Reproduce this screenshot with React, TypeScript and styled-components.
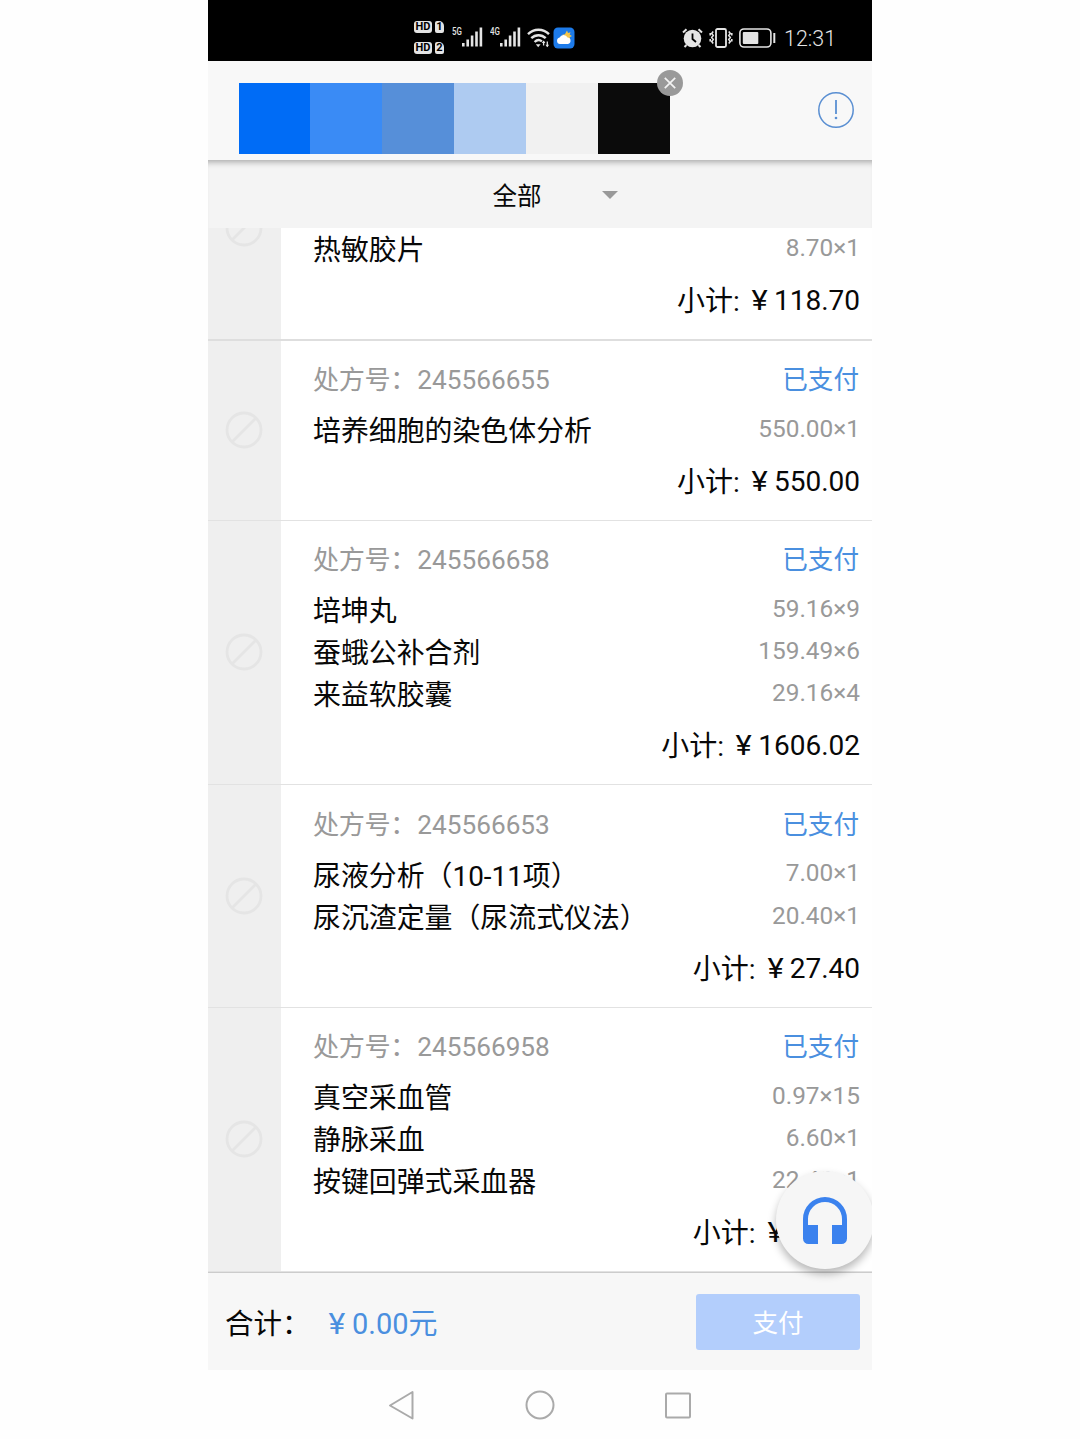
import React from 'react';
import styled, { createGlobalStyle } from 'styled-components';

const Global = createGlobalStyle`
  * { box-sizing: border-box; }
  body {
    margin: 0;
    background: #fefefe;
    font-family: Roboto, "Noto Sans CJK SC", sans-serif;
    color: #080808;
  }
  svg { display: block; flex: none; }
`;

const Phone = styled.main`
  width: 664px;
  height: 1439px;
  margin-left: 208px;
  display: flex;
  flex-direction: column;
  position: relative;
  overflow: hidden;
  background: #fefefe;
`;

const StatusBar = styled.div`
  height: 61px;
  flex: none;
  background: #000;
  color: #e4e4e4;
  display: flex;
  justify-content: space-between;
  padding: 13px 36px 0 206px;
`;

const StatusGroup = styled.div<{ $gap: number }>`
  display: flex;
  align-items: center;
  gap: ${(p) => p.$gap}px;
  height: 49px;
`;

const SimColumn = styled.div`
  display: flex;
  flex-direction: column;
  gap: 9px;
  margin-right: 8px;
`;

const SimRow = styled.div`
  display: flex;
  gap: 3px;
`;

const SimTag = styled.span<{ $w: number; $cut?: boolean }>`
  width: ${(p) => p.$w}px;
  height: 12px;
  border-radius: ${(p) => (p.$cut ? '2px 5px 2px 2px' : '3px')};
  background: #e4e4e4;
  color: #000;
  font-size: 11px;
  font-weight: 700;
  line-height: 12.5px;
  text-align: center;
`;

const Signal = styled.div`
  display: flex;
  align-items: flex-start;
  height: 22px;
  margin-right: 6.5px;
`;

const NetLabel = styled.span`
  width: 10px;
  font-size: 11px;
  line-height: 10px;
  font-weight: 500;
  transform: scaleX(0.72);
  transform-origin: left;
`;

const WeatherSlot = styled.div`
  margin-left: 3px;
`;

const Clock = styled.span`
  font-size: 21.4px;
  font-weight: 300;
  margin-left: 2.5px;
  line-height: 28px;
  padding-top: 3px;
`;

const Header = styled.header`
  height: 99px;
  flex: none;
  background: #f8f8f8;
  display: flex;
  justify-content: space-between;
  padding: 21.5px 18px 0 30.5px;
`;

const Palette = styled.div`
  display: flex;
  position: relative;
  height: 71.8px;
`;

const Swatch = styled.div<{ $color: string }>`
  width: 71.9px;
  height: 71.8px;
  background: ${(p) => p.$color};
`;

const CloseBadge = styled.button`
  position: absolute;
  right: -13px;
  top: -13px;
  width: 26px;
  height: 26px;
  padding: 0;
  border: 0;
  border-radius: 50%;
  background: #999;
  display: grid;
  place-items: center;
`;

const InfoButton = styled.button`
  width: 36px;
  height: 36px;
  margin-top: 9px;
  padding: 0;
  border: 0;
  background: none;
`;

const Filter = styled.div`
  height: 68px;
  flex: none;
  background: #f4f4f4;
  box-shadow: inset 0 7px 6px -5px rgba(0, 0, 0, 0.32);
  display: flex;
  align-items: center;
  gap: 60.5px;
  padding: 6px 0 0 284.5px;
  font-size: 24.5px;
  line-height: 36px;
`;

const Caret = styled.span`
  border: 8.5px solid transparent;
  border-top-color: #999;
  border-bottom: 0;
  margin-top: -5px;
`;

const List = styled.section`
  height: 1044px;
  flex: none;
  overflow: hidden;
  display: flex;
  flex-direction: column;
  justify-content: flex-end;
`;

const Card = styled.article<{ $rows: number; $strong?: boolean }>`
  flex: none;
  height: ${(p) => 137.9 + p.$rows * 42.2}px;
  display: flex;
  background: #fff;
  border-bottom: ${(p) => (p.$strong ? '2px solid #dedede' : '1px solid #e2e2e2')};
`;

const CheckColumn = styled.div`
  width: 73px;
  background: #efefef;
  display: grid;
  place-items: center;
  padding-right: 1px;
`;

const Detail = styled.div`
  flex: 1;
  display: flex;
  flex-direction: column;
  justify-content: flex-end;
  padding: 0 12px 7.8px 32px;
`;

const CardHead = styled.div`
  display: flex;
  justify-content: space-between;
  height: 40px;
  line-height: 40px;
  margin-bottom: 9.5px;
  font-size: 26.2px;
  color: #999;
`;

const HeadLabel = styled.span`
  letter-spacing: -0.4px;
  margin-right: 1.2px;
`;

const Paid = styled.span`
  color: #4a8fdf;
  font-size: 25.6px;
  padding-right: 1px;
`;

const Item = styled.div`
  display: flex;
  justify-content: space-between;
  height: 42.2px;
  line-height: 42.2px;
  font-size: 27.9px;
`;

const ItemName = styled.span`
  padding-top: 1.2px;
`;

const Price = styled.span`
  font-size: 24.4px;
  line-height: 41.4px;
  margin-top: -2px;
  color: #999;
`;

const Subtotal = styled.div`
  height: 60px;
  line-height: 60px;
  text-align: right;
  font-size: 28px;
  white-space: pre;
`;

const SubtotalLabel = styled.span`
  display: inline-block;
  transform: translate(0.8px, 1px);
`;

const Yen = styled.span`
  display: inline-block;
  width: 1em;
  text-align: center;
  transform: translateX(-0.5px) scaleX(1.1);
`;

const Footer = styled.footer`
  height: 98px;
  flex: none;
  background: #f7f7f7;
  border-top: 1.5px solid #ccc;
  display: flex;
  align-items: center;
  padding: 0 12px 0 17px;
  font-size: 28.5px;
`;

const Total = styled.span`
  color: #4a8fdf;
  margin-left: 12.5px;
  padding-bottom: 2px;
  font-size: 29px;
  flex: 1;
`;

const PayButton = styled.button`
  width: 164px;
  height: 56px;
  border: 0;
  padding: 0 0 3px;
  border-radius: 3px;
  background: #b3cefc;
  color: #fff;
  font: 25.5px Roboto, "Noto Sans CJK SC", sans-serif;
`;

const NavBar = styled.nav`
  height: 69px;
  display: flex;
  justify-content: center;
  gap: 108px;
  padding-top: 20px;
`;

const Support = styled.button`
  position: absolute;
  left: 568px;
  top: 1171px;
  width: 98px;
  height: 98px;
  padding: 0;
  border: 0;
  border-radius: 50%;
  background: #f6f6f6;
  box-shadow: 0 5px 9px rgba(0, 0, 0, 0.28);
  display: grid;
  place-items: center;
`;

type Line = { name: string; price: string };
type Order = { id?: string; rows: number; lines: Line[]; subtotal: string };

const orders: Order[] = [
  { rows: 2, lines: [{ name: '热敏胶片', price: '8.70×1' }], subtotal: '118.70' },
  {
    id: '245566655',
    rows: 1,
    lines: [{ name: '培养细胞的染色体分析', price: '550.00×1' }],
    subtotal: '550.00',
  },
  {
    id: '245566658',
    rows: 3,
    lines: [
      { name: '培坤丸', price: '59.16×9' },
      { name: '蚕蛾公补合剂', price: '159.49×6' },
      { name: '来益软胶囊', price: '29.16×4' },
    ],
    subtotal: '1606.02',
  },
  {
    id: '245566653',
    rows: 2,
    lines: [
      { name: '尿液分析（10-11项）', price: '7.00×1' },
      { name: '尿沉渣定量（尿流式仪法）', price: '20.40×1' },
    ],
    subtotal: '27.40',
  },
  {
    id: '245566958',
    rows: 3,
    lines: [
      { name: '真空采血管', price: '0.97×15' },
      { name: '静脉采血', price: '6.60×1' },
      { name: '按键回弹式采血器', price: '22.40×1' },
    ],
    subtotal: '43.55',
  },
];

const swatches = ['#006cf6', '#3a8bf5', '#568fd9', '#aecbf1', '#f1f1f1', '#0b0b0b'];

const Bars = () => (
  <svg width="21" height="20" viewBox="0 0 21 20" fill="#e4e4e4">
    <rect x="0" y="16" width="2.6" height="3.5" />
    <rect x="4.4" y="12.5" width="2.6" height="7" />
    <rect x="8.8" y="8.5" width="2.6" height="11" />
    <rect x="13.2" y="4.5" width="2.6" height="15" />
    <rect x="17.6" y="0.5" width="2.6" height="19" />
  </svg>
);

const Wifi = () => (
  <svg width="23" height="20" viewBox="0 0 23 20" fill="none" stroke="#e4e4e4" strokeWidth="2.4">
    <path d="M1 6.2C7 .2 16 .2 22 6.2M4.3 10.2c4-4 10.4-4 14.4 0M7.6 14c2.4-2.3 5.2-2.3 7.3-.6" />
    <path d="M8.8 16.2h4.8l-2.4 3z" fill="#e4e4e4" stroke="none" />
    <path d="M16.6 17.5v-4.5M20.3 13.5v5" strokeWidth="1.3" />
    <path d="M14.8 15l1.8-2.6 1.8 2.6zM18.5 16.7l1.8 2.6 1.8-2.6z" fill="#e4e4e4" stroke="none" />
  </svg>
);

const Weather = () => (
  <svg width="22" height="22" viewBox="0 0 22 22">
    <rect x=".5" y=".5" width="21" height="21" rx="4.5" fill="#1d7bea" />
    <path d="M14 3.5l1 2.5 2.5-.8-.8 2.6 2.3 1.2-2.3 1.3.6 2.5h-6l-2-5 2.6-.5z" fill="#f6c548" />
    <path d="M7 17a3.3 3.3 0 0 1-.4-6.5A4.3 4.3 0 0 1 14.5 10.5 3.3 3.3 0 0 1 15 17z" fill="#fff" />
  </svg>
);

const Alarm = () => (
  <svg width="21" height="20" viewBox="0 0 21 20" fill="none" stroke="#e4e4e4" strokeWidth="2">
    <circle cx="10.5" cy="10.5" r="8.8" fill="#e4e4e4" stroke="none" />
    <path d="M1 4.5L4.5 1.2M20 4.5L16.5 1.2M4.5 17l-2 2M16.5 17l2 2" />
    <path d="M10.5 5.500v5.500l3.500 3" stroke="#000" strokeWidth="1.8" />
  </svg>
);

const Vibrate = () => (
  <svg width="24" height="20" viewBox="0 0 24 20" fill="none" stroke="#e4e4e4" strokeWidth="1.8">
    <rect x="7" y="1" width="10" height="18" rx="1.5" />
    <path d="M4.2 3.5l-1.5 2 1.5 2-1.5 2 1.5 2-1.5 2 1.5 2M1.2 5v2.5M1.2 11v2.5" strokeWidth="1.6" />
    <path d="M19.8 3.5l1.5 2-1.5 2 1.5 2-1.5 2 1.5 2-1.5 2M22.8 5v2.5M22.8 11v2.5" strokeWidth="1.6" />
  </svg>
);

const Battery = () => (
  <svg width="37" height="20" viewBox="0 0 37 20" fill="none">
    <rect x=".9" y="1" width="31" height="18" rx="4" stroke="#e4e4e4" strokeWidth="1.6" />
    <rect x="3.8" y="4" width="15.5" height="12" rx="1" fill="#e4e4e4" />
    <path d="M35.3 5v10" stroke="#e4e4e4" strokeWidth="2" />
  </svg>
);

const Forbidden = () => (
  <svg width="38" height="38" viewBox="0 0 38 38" fill="none" stroke="#e5e5e5" strokeWidth="2.8">
    <circle cx="19" cy="19" r="17" />
    <path d="M7.5 30.5l23-23" />
  </svg>
);

const OrderCard = ({ order, strong }: { order: Order; strong: boolean }) => (
  <Card $rows={order.rows} $strong={strong}>
    <CheckColumn>
      <Forbidden />
    </CheckColumn>
    <Detail>
      {order.id && (
        <CardHead>
          <span>
            <HeadLabel>处方号：</HeadLabel>
            {order.id}
          </span>
          <Paid>已支付</Paid>
        </CardHead>
      )}
      {order.lines.map((line) => (
        <Item key={line.name}>
          <ItemName>{line.name}</ItemName>
          <Price>{line.price}</Price>
        </Item>
      ))}
      <Subtotal>
        <SubtotalLabel>小计: </SubtotalLabel>
        <Yen>¥</Yen>
        {order.subtotal}
      </Subtotal>
    </Detail>
  </Card>
);

export default function App() {
  return (
    <>
      <Global />
      <Phone>
        <StatusBar>
          <StatusGroup $gap={0}>
            <SimColumn>
              {['1', '2'].map((n) => (
                <SimRow key={n}>
                  <SimTag $w={18}>HD</SimTag>
                  <SimTag $w={9} $cut>{n}</SimTag>
                </SimRow>
              ))}
            </SimColumn>
            {['5G', '4G'].map((n) => (
              <Signal key={n}>
                <NetLabel>{n}</NetLabel>
                <Bars />
              </Signal>
            ))}
            <Wifi />
            <WeatherSlot>
              <Weather />
            </WeatherSlot>
          </StatusGroup>
          <StatusGroup $gap={6}>
            <Alarm />
            <Vibrate />
            <Battery />
            <Clock>12:31</Clock>
          </StatusGroup>
        </StatusBar>
        <Header>
          <Palette>
            {swatches.map((c) => (
              <Swatch key={c} $color={c} />
            ))}
            <CloseBadge>
              <svg width="12" height="12" viewBox="0 0 12 12" stroke="#f2f2f2" strokeWidth="1.7">
                <path d="M.8.8l10.4 10.4M11.2.8L.8 11.2" />
              </svg>
            </CloseBadge>
          </Palette>
          <InfoButton>
            <svg width="36" height="36" viewBox="0 0 36 36" fill="none" stroke="#5a8fd2" strokeWidth="1.5">
              <circle cx="18" cy="18" r="17.2" />
              <path d="M18 8v14" strokeWidth="1.8" />
              <circle cx="18" cy="26" r="1.3" fill="#5a8fd2" stroke="none" />
            </svg>
          </InfoButton>
        </Header>
        <Filter>
          <span>全部</span>
          <Caret />
        </Filter>
        <List>
          {orders.map((order, i) => (
            <OrderCard key={order.subtotal} order={order} strong={i === 0} />
          ))}
        </List>
        <Footer>
          <span>合计：</span>
          <Total>
            <Yen>¥</Yen>0.00元
          </Total>
          <PayButton>支付</PayButton>
        </Footer>
        <NavBar>
          <svg width="30" height="30" viewBox="0 0 30 30" fill="none" stroke="#aaa" strokeWidth="2" strokeLinejoin="round">
            <path d="M25.5 2v26.500L3 15.500z" />
          </svg>
          <svg width="30" height="30" viewBox="0 0 30 30" fill="none" stroke="#aaa" strokeWidth="2">
            <circle cx="15" cy="15" r="13.5" />
          </svg>
          <svg width="30" height="30" viewBox="0 0 30 30" fill="none" stroke="#aaa" strokeWidth="2">
            <rect x="3" y="3.5" width="24" height="24" rx="1" />
          </svg>
        </NavBar>
        <Support>
          <svg width="44" height="47" viewBox="0 0 44 47">
            <path
              d="M22 0A22 22 0 0 0 0 22v19.500a5.500 5.500 0 0 0 5.500 5.500H15V28H5v-6a17 17 0 0 1 34 0v6H29v19h9.500a5.500 5.500 0 0 0 5.500-5.500V22A22 22 0 0 0 22 0z"
              fill="#3b82ee"
            />
          </svg>
        </Support>
      </Phone>
    </>
  );
}
